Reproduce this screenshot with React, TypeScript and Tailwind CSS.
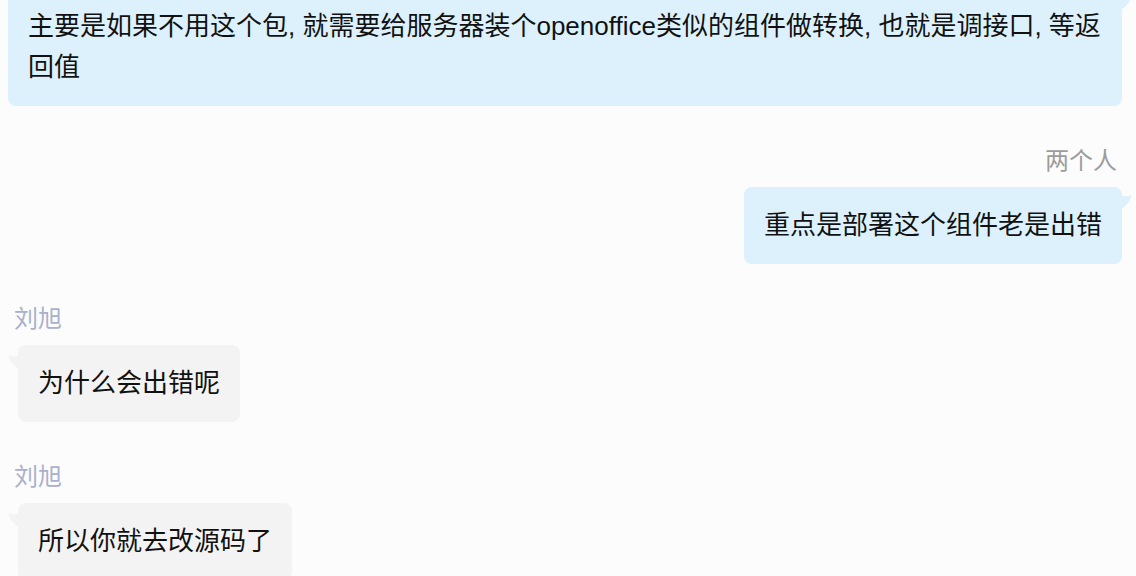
import React from 'react'

type Msg = {
    side: 'left' | 'right'
    name?: string
    text: string
}

const messages: Msg[] = [
    {
        side: 'right',
        text: '主要是如果不用这个包, 就需要给服务器装个openoffice类似的组件做转换, 也就是调接口, 等返回值',
    },
    { side: 'right', name: '两个人', text: '重点是部署这个组件老是出错' },
    { side: 'left', name: '刘旭', text: '为什么会出错呢' },
    { side: 'left', name: '刘旭', text: '所以你就去改源码了' },
]

const Tail = ({ side, color }: { side: 'left' | 'right'; color: string }) => (
    <svg
        width="11"
        height="16"
        viewBox="0 0 11 16"
        className={side === 'right' ? 'absolute -right-[10px] top-[7px]' : 'absolute -left-[10px] top-[9px] -scale-x-100'}
    >
        <path d="M0 1 C4 3 8 3 10.5 0.5 C9.5 7 5.5 12 0 15 Z" fill={color} />
    </svg>
)

const Bubble = ({ msg }: { msg: Msg }) => {
    const right = msg.side === 'right'
    const color = right ? '#ddf1fc' : '#f3f3f3'
    return (
        <div className={right ? 'flex flex-col items-end' : 'flex flex-col items-start'}>
            {msg.name && (
                <div
                    className={
                        right
                            ? 'mb-[11px] pr-[5px] text-[24px] leading-[30px] text-[#9c9c9c]'
                            : 'mb-[11px] ml-[6px] text-[24px] leading-[30px] text-[#a9b1cd]'
                    }
                >
                    {msg.name}
                </div>
            )}
            <div
                className={
                    right
                        ? 'relative max-w-[1114px] rounded-[8px] bg-[#ddf1fc] px-[20px] py-[18px] text-[26px] leading-[41px] text-[#111]'
                        : 'relative ml-[10px] max-w-[1000px] rounded-[8px] bg-[#f3f3f3] px-[20px] py-[18px] text-[26px] leading-[41px] text-[#111]'
                }
            >
                <Tail side={msg.side} color={color} />
                {msg.text}
            </div>
        </div>
    )
}

export default function App() {
    return (
        <div
            className="h-[576px] w-[1136px] overflow-hidden bg-[#fcfcfc]"
            style={{ fontFamily: '"Liberation Sans", "Noto Sans CJK SC", sans-serif' }}
        >
            <div className="-mt-[12px] flex flex-col gap-[40px] pl-[8px] pr-[14px]">
                {messages.map((m, i) => (
                    <Bubble key={i} msg={m} />
                ))}
            </div>
        </div>
    )
}
